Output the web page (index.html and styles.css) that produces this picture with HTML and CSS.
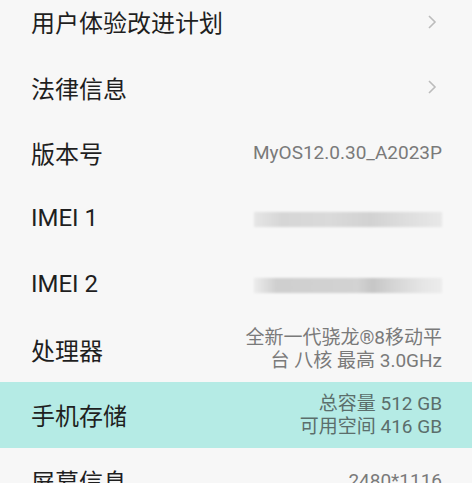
FILE: index.html
```html
<!DOCTYPE html>
<html lang="zh-CN">

<head>
    <meta charset="UTF-8">
    <meta name="viewport" content="width=device-width, initial-scale=1.0">
    <title>关于手机</title>
    <link rel="stylesheet" href="styles.css">
</head>

<body>
    <div class="list">
        <div class="row">
            <span class="label">用户体验改进计划</span>
            <svg class="chevron" viewBox="0 0 12 16">
                <path d="M3 2l6 6-6 6" />
            </svg>
        </div>
        <div class="row">
            <span class="label">法律信息</span>
            <svg class="chevron" viewBox="0 0 12 16">
                <path d="M3 2l6 6-6 6" />
            </svg>
        </div>
        <div class="row">
            <span class="label">版本号</span>
            <span class="value">MyOS12.0.30_A2023P</span>
        </div>
        <div class="row">
            <span class="label">IMEI 1</span>
            <div class="masked"></div>
        </div>
        <div class="row">
            <span class="label">IMEI 2</span>
            <div class="masked masked-2"></div>
        </div>
        <div class="row">
            <span class="label">处理器</span>
            <span class="value multi">全新一代骁龙®8移动平<br>台 八核 最高 3.0GHz</span>
        </div>
        <div class="row active">
            <span class="label">手机存储</span>
            <span class="value multi">总容量 512 GB<br>可用空间 416 GB</span>
        </div>
        <div class="row">
            <span class="label">屏幕信息</span>
            <span class="value">2480*1116</span>
        </div>
    </div>
</body>

</html>
```

FILE: styles.css
```css
body,
html {
    margin: 0;
    padding: 0;
    height: 100%;
    width: 100%;
    background-color: #f7f7f7;
    font-family: Roboto, "Noto Sans CJK SC", sans-serif;
    overflow: hidden;
}

.list {
    display: flex;
    flex-direction: column;
    margin-top: -11px;
}

.row {
    height: 65.5px;
    display: flex;
    align-items: center;
    justify-content: space-between;
    padding: 0 30px 0 31px;
    box-sizing: border-box;
}

.row.active {
    background-color: #b5ebe5;
}

.label {
    font-size: 24px;
    color: #1f1f1f;
}

.value {
    font-size: 19px;
    color: #7a7a7a;
    text-align: right;
}

.value.multi {
    line-height: 23px;
}

.row.active .value {
    color: #5b6e6b;
}

.chevron {
    width: 12px;
    height: 16px;
    margin-right: 4px;
    fill: none;
    stroke: #bcbcbc;
    stroke-width: 1.6;
}

.masked {
    width: 188px;
    height: 15px;
    margin-top: 2px;
    background: linear-gradient(90deg, #e6e6e6 0%, #d6d6d6 15%, #dadada 40%, #d2d2d2 62%, #dcdcdc 78%, #e8e8e8 100%);
    filter: blur(1px);
}

.masked-2 {
    margin-top: 4px;
    background: linear-gradient(90deg, #ececec 0%, #cfcfcf 12%, #d3d3d3 55%, #c6c6c6 63%, #d6d6d6 75%, #e6e6e6 90%, #ececec 100%);
}
```
